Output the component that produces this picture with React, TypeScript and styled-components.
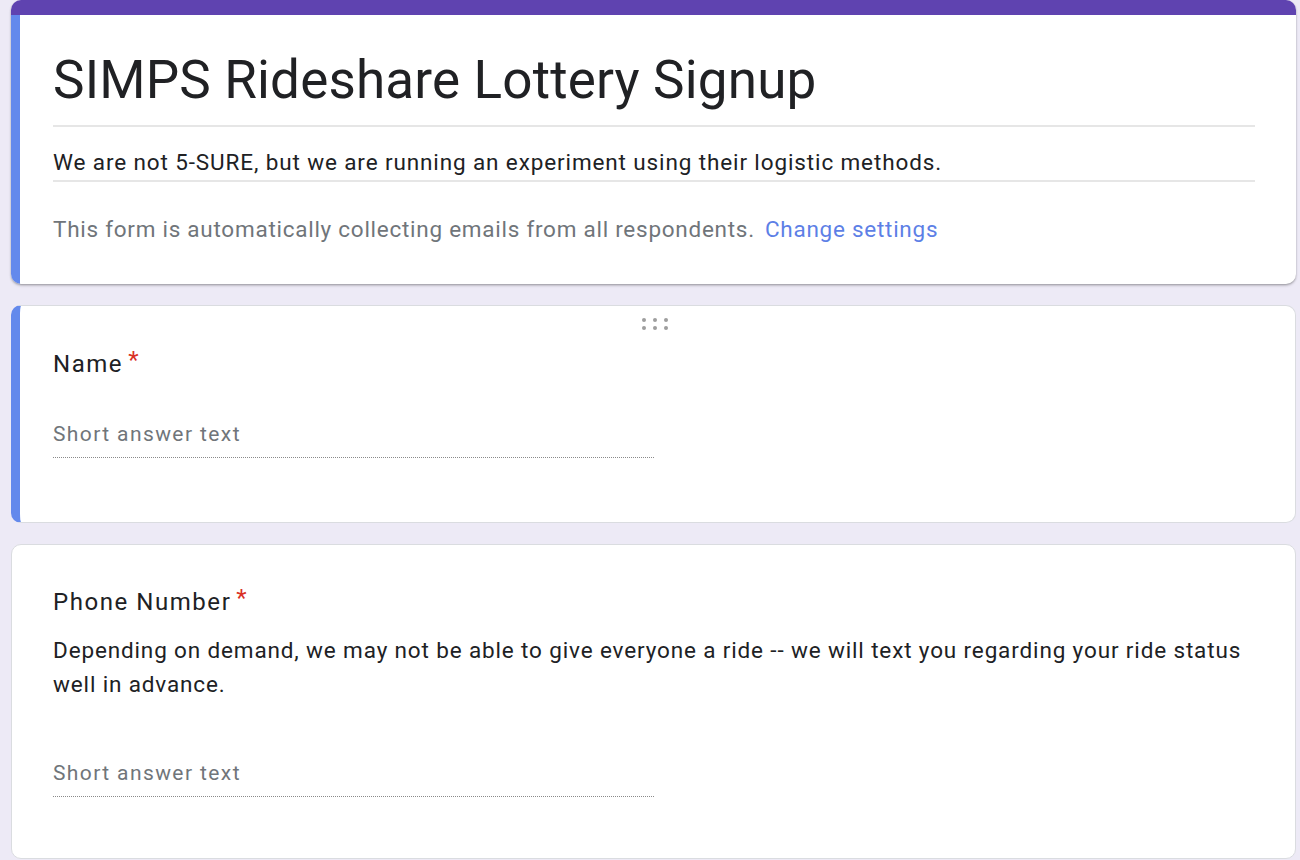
import React from "react";
import styled, { createGlobalStyle } from "styled-components";

const GlobalStyle = createGlobalStyle`
  html, body {
    margin: 0;
    padding: 0;
    background: #edeaf6;
    font-family: "Roboto", "Liberation Sans", Arial, sans-serif;
    color: #202124;
  }
  * { box-sizing: border-box; }
`;

const Page = styled.div`
  display: flex;
  flex-direction: column;
  gap: 21px;
  padding: 0 4px 0 11px;
  min-height: 860px;
`;

const HeaderCard = styled.div`
  background: #fff;
  border-radius: 10px;
  overflow: hidden;
  box-shadow: 0 1px 2px rgba(0, 0, 0, 0.25), 0 2px 3px rgba(0, 0, 0, 0.12);
  display: flex;
  flex-direction: column;
`;

const ThemeBar = styled.div`
  height: 15px;
  background: #5f43b0;
`;

const HeaderBody = styled.div`
  border-left: 9px solid #6389ec;
  padding: 33px 41px 40px 33px;
  display: flex;
  flex-direction: column;
`;

const Title = styled.h1`
  margin: 0;
  font-weight: 400;
  font-size: 53px;
  line-height: 64px;
  letter-spacing: 0.17px;
  color: #202124;
  padding-bottom: 13px;
  border-bottom: 2px solid #e6e6e6;
`;

const Description = styled.div`
  margin-top: 20px;
  font-size: 22.5px;
  line-height: 30px;
  letter-spacing: 0.88px;
  color: #202124;
  padding-bottom: 3px;
  border-bottom: 2px solid #e6e6e6;
`;

const Notice = styled.div`
  margin-top: 32px;
  font-size: 22.5px;
  line-height: 30px;
  letter-spacing: 0.74px;
  color: #70757a;
`;

const SettingsLink = styled.a`
  color: #5d7fe6;
  text-decoration: none;
  margin-left: 10px;
`;

const QuestionCard = styled.div<{ $active?: boolean }>`
  background: #fff;
  border-radius: 10px;
  border: 1px solid #dadce0;
  border-left: ${(p) => (p.$active ? "9px solid #6389ec" : "1px solid #dadce0")};
  padding: 0 41px 0 ${(p) => (p.$active ? "33px" : "41px")};
  display: flex;
  flex-direction: column;
`;

const HandleRow = styled.div`
  height: 41px;
  padding-top: 12px;
  display: flex;
  justify-content: center;
`;

const Handle = styled.div<{ $visible?: boolean }>`
  display: grid;
  grid-template-columns: repeat(3, 4px);
  grid-auto-rows: 4px;
  column-gap: 7px;
  row-gap: 4px;
  visibility: ${(p) => (p.$visible ? "visible" : "hidden")};
  margin-left: 2px;
`;

const Dot = styled.span`
  width: 4px;
  height: 4px;
  border-radius: 50%;
  background: #9e9e9e;
`;

const QuestionTitle = styled.div`
  font-size: 24px;
  line-height: 32px;
  letter-spacing: 1.55px;
  color: #202124;
`;

const Required = styled.span`
  color: #d93025;
  margin-left: 5px;
  font-size: 24px;
  letter-spacing: 0;
  position: relative;
  top: -4px;
`;

const QuestionHelp = styled.div`
  margin-top: 15px;
  font-size: 22.5px;
  line-height: 34px;
  letter-spacing: 0.86px;
  color: #202124;
`;

const AnswerField = styled.div<{ $gap: number }>`
  margin-top: ${(p) => p.$gap}px;
  width: 50%;
  font-size: 21px;
  line-height: 28px;
  letter-spacing: 1.4px;
  color: #70757a;
  padding-bottom: 9px;
  border-bottom: 1px dotted #8a8a8a;
`;

const Spacer = styled.div<{ $h: number }>`
  height: ${(p) => p.$h}px;
`;

export default function App() {
  return (
    <>
      <GlobalStyle />
      <Page>
        <HeaderCard>
          <ThemeBar />
          <HeaderBody>
            <Title>SIMPS Rideshare Lottery Signup</Title>
            <Description>
              We are not 5-SURE, but we are running an experiment using their logistic methods.
            </Description>
            <Notice>
              This form is automatically collecting emails from all respondents.
              <SettingsLink href="#">Change settings</SettingsLink>
            </Notice>
          </HeaderBody>
        </HeaderCard>

        <QuestionCard $active>
          <HandleRow>
            <Handle $visible>
              {Array.from({ length: 6 }).map((_, i) => (
                <Dot key={i} />
              ))}
            </Handle>
          </HandleRow>
          <Spacer $h={1} />
          <QuestionTitle>
            Name<Required>*</Required>
          </QuestionTitle>
          <AnswerField $gap={40}>Short answer text</AnswerField>
          <Spacer $h={64} />
        </QuestionCard>

        <QuestionCard>
          <HandleRow />
          <QuestionTitle>
            Phone Number<Required>*</Required>
          </QuestionTitle>
          <QuestionHelp>
            Depending on demand, we may not be able to give everyone a ride -- we will text you
            regarding your ride status well in advance.
          </QuestionHelp>
          <AnswerField $gap={58}>Short answer text</AnswerField>
          <Spacer $h={61} />
        </QuestionCard>
      </Page>
    </>
  );
}
